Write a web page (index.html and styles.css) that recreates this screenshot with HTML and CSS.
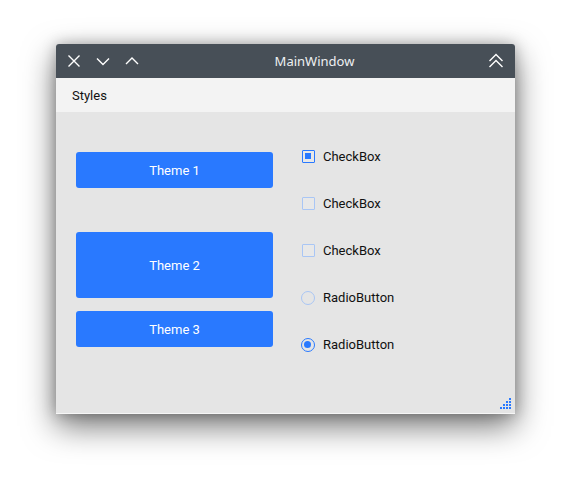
FILE: index.html
```html
<!DOCTYPE html>
<html>
<head>
<meta charset="utf-8">
<link rel="stylesheet" href="styles.css">
</head>
<body>
<div class="window">
  <div class="titlebar">
    <div class="tb-left">
      <svg class="tb-icon" width="16" height="16" viewBox="0 0 16 16"><path d="M2.5 2.5 L13.5 13.5 M13.5 2.5 L2.5 13.5" stroke="#fff" stroke-width="1.4" fill="none"/></svg>
      <svg class="tb-icon" width="16" height="16" viewBox="0 0 16 16"><path d="M2 5.5 L8 11.5 L14 5.5" stroke="#fff" stroke-width="1.4" fill="none"/></svg>
      <svg class="tb-icon" width="16" height="16" viewBox="0 0 16 16"><path d="M2 11 L8 5 L14 11" stroke="#fff" stroke-width="1.4" fill="none"/></svg>
    </div>
    <div class="title">MainWindow</div>
    <div class="tb-right">
      <svg class="tb-icon" width="18" height="18" viewBox="0 0 18 18"><path d="M2.5 9 L9 2.5 L15.5 9 M2.5 15 L9 8.5 L15.5 15" stroke="#fff" stroke-width="1.4" fill="none"/></svg>
    </div>
  </div>
  <div class="menubar"><span class="menu-item">Styles</span></div>
  <div class="content">
    <div class="buttons">
      <div class="btn btn-1">Theme 1</div>
      <div class="btn btn-2">Theme 2</div>
      <div class="btn btn-3">Theme 3</div>
    </div>
    <div class="checks">
      <div class="row"><span class="box checked"></span><span>CheckBox</span></div>
      <div class="row"><span class="box"></span><span>CheckBox</span></div>
      <div class="row"><span class="box"></span><span>CheckBox</span></div>
      <div class="row"><span class="radio"></span><span>RadioButton</span></div>
      <div class="row"><span class="radio checked"></span><span>RadioButton</span></div>
    </div>
    <svg class="grip" width="12" height="12" viewBox="0 0 12 12">
      <rect x="9" y="0" width="2" height="2" fill="#2979ff"/>
      <rect x="6" y="3" width="2" height="2" fill="#2979ff"/>
      <rect x="9" y="3" width="2" height="2" fill="#2979ff"/>
      <rect x="3" y="6" width="2" height="2" fill="#2979ff"/>
      <rect x="6" y="6" width="2" height="2" fill="#2979ff"/>
      <rect x="9" y="6" width="2" height="2" fill="#2979ff"/>
      <rect x="0" y="9" width="2" height="2" fill="#2979ff"/>
      <rect x="3" y="9" width="2" height="2" fill="#2979ff"/>
      <rect x="6" y="9" width="2" height="2" fill="#2979ff"/>
      <rect x="9" y="9" width="2" height="2" fill="#2979ff"/>
    </svg>
  </div>
</div>
</body>
</html>
```
FILE: styles.css
```css
html, body {
  margin: 0;
  padding: 0;
  background: #ffffff;
  font-family: Roboto, "Noto Sans", sans-serif;
  font-size: 13px;
  color: #1a1a1a;
}
body {
  padding: 44px 0 0 56px;
  height: 483px;
  box-sizing: border-box;
  overflow: hidden;
}
.window {
  width: 459px;
  height: 370px;
  display: flex;
  flex-direction: column;
  border-radius: 3px 3px 0 0;
  box-shadow: 0 12px 32px rgba(0, 0, 0, 0.55), 0 0 14px rgba(0, 0, 0, 0.25);
  overflow: hidden;
}
.titlebar {
  height: 34px;
  background: #474f57;
  display: flex;
  align-items: center;
  position: relative;
  color: #ffffff;
  flex: none;
}
.tb-left {
  display: flex;
  align-items: center;
  gap: 13px;
  padding-left: 10px;
}
.tb-icon { display: block; }
.title {
  flex: 1;
  text-align: center;
  font-family: "Noto Sans", sans-serif;
  font-size: 13px;
  color: #eef0f2;
  padding-left: 2px;
}
.tb-right {
  padding-right: 10px;
  display: flex;
  align-items: center;
}
.menubar {
  height: 34px;
  background: #f3f3f3;
  display: flex;
  align-items: center;
  flex: none;
}
.menu-item {
  padding-left: 16px;
  font-size: 13px;
  color: #111;
}
.content {
  flex: 1;
  background: #e5e5e5;
  display: flex;
  position: relative;
  border-bottom: 1px solid #f6f6f6;
}
.buttons {
  width: 197px;
  margin-left: 20px;
  padding-top: 40px;
  display: flex;
  flex-direction: column;
}
.btn {
  background: #2979ff;
  color: #ffffff;
  border-radius: 3px;
  display: flex;
  align-items: center;
  justify-content: center;
  font-size: 13px;
}
.btn-1 { height: 36px; }
.btn-2 { height: 66px; margin-top: 44px; }
.btn-3 { height: 36px; margin-top: 13px; }
.checks {
  margin-left: 29px;
  padding-top: 21px;
  display: flex;
  flex-direction: column;
}
.row {
  height: 47px;
  display: flex;
  align-items: center;
  gap: 8px;
  font-size: 13px;
  color: #111;
}
.box {
  width: 13px;
  height: 13px;
  box-sizing: border-box;
  border: 1px solid #a9c6f5;
  border-radius: 1px;
  background: #e8e8e8;
  position: relative;
}
.box.checked {
  border-color: #2979ff;
  border-width: 1.5px;
}
.box.checked::after {
  content: "";
  position: absolute;
  left: 2px;
  top: 2px;
  width: 6px;
  height: 6px;
  background: #2979ff;
}
.radio {
  width: 14px;
  height: 14px;
  margin-left: -1px;
  box-sizing: border-box;
  border: 1px solid #a9c6f5;
  border-radius: 50%;
  position: relative;
}
.radio.checked {
  border: 1.5px solid #2979ff;
}
.radio.checked::after {
  content: "";
  position: absolute;
  left: 2px;
  top: 2px;
  width: 7px;
  height: 7px;
  border-radius: 50%;
  background: #2979ff;
}
.grip {
  position: absolute;
  right: 3px;
  bottom: 3px;
}
```
